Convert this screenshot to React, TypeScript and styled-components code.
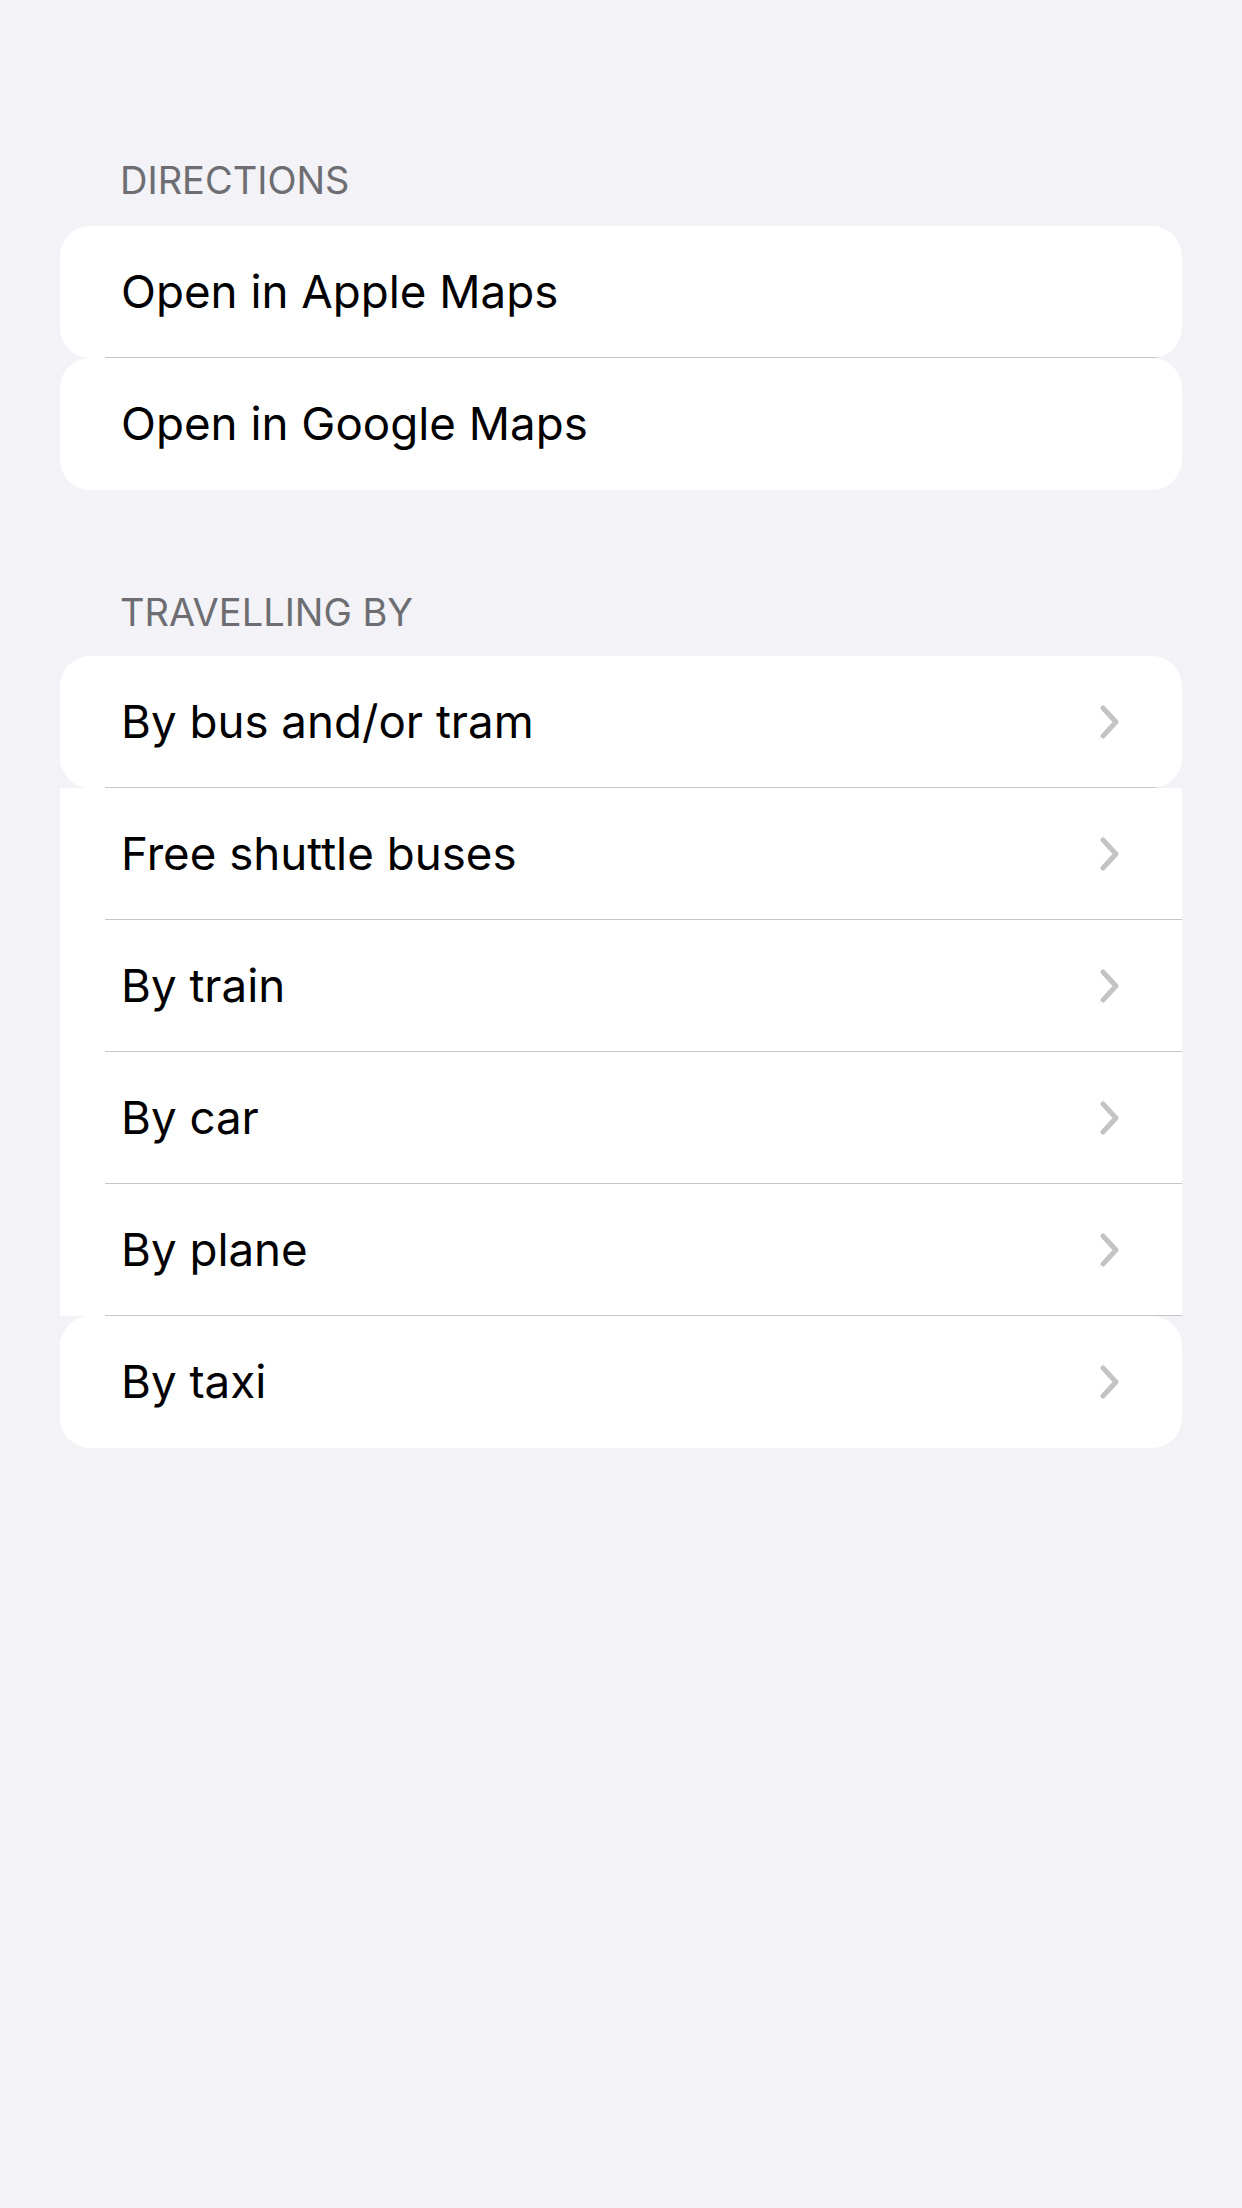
import React from "react";
import styled, { createGlobalStyle } from "styled-components";

const GlobalStyle = createGlobalStyle`
  html, body {
    margin: 0;
    padding: 0;
    background: #f2f2f7;
  }
  body {
    font-family: Inter, "Noto Sans", "Liberation Sans", sans-serif;
    -webkit-font-smoothing: antialiased;
  }
`;

const Page = styled.div`
  min-height: 2208px;
  box-sizing: border-box;
  background: #f2f2f7;
  padding: 157px 60px 0;
  display: flex;
  flex-direction: column;
  gap: 99px;
`;

const Section = styled.section`
  display: flex;
  flex-direction: column;
`;

const SectionHeader = styled.h2<{ $gap: number }>`
  margin: 0 0 ${(p) => p.$gap}px;
  padding-left: 60px;
  font-size: 38px;
  line-height: 46px;
  font-weight: 400;
  color: #6d6d72;
  text-transform: uppercase;
  letter-spacing: 0;
`;

const Group = styled.div`
  display: flex;
  flex-direction: column;
`;

const Row = styled.div<{ $rounded: boolean; $separator: boolean }>`
  height: 132px;
  box-sizing: border-box;
  padding: 0 62px 1px 61px;
  display: flex;
  align-items: center;
  justify-content: space-between;
  border-radius: ${(p) => (p.$rounded ? "30px" : "0")};
  background: ${(p) =>
    p.$separator
      ? "linear-gradient(#c6c6c8, #c6c6c8) no-repeat 45px 100% / calc(100% - 45px) 1px, #ffffff"
      : "#ffffff"};
  cursor: pointer;
`;

const Label = styled.span`
  font-size: 45.7px;
  color: #000000;
  letter-spacing: 0;
`;

const Chevron = styled.svg`
  width: 20px;
  height: 34px;
  flex: none;
`;

const ChevronIcon = () => (
  <Chevron viewBox="0 0 20 34">
    <path
      d="M3 3 L16 17 L3 31"
      fill="none"
      stroke="#c4c4c6"
      strokeWidth={5}
      strokeLinecap="round"
      strokeLinejoin="round"
    />
  </Chevron>
);

type Item = { label: string; rounded: boolean; chevron: boolean };

const directions: Item[] = [
  { label: "Open in Apple Maps", rounded: true, chevron: false },
  { label: "Open in Google Maps", rounded: true, chevron: false },
];

const travelling: Item[] = [
  { label: "By bus and/or tram", rounded: true, chevron: true },
  { label: "Free shuttle buses", rounded: false, chevron: true },
  { label: "By train", rounded: false, chevron: true },
  { label: "By car", rounded: false, chevron: true },
  { label: "By plane", rounded: false, chevron: true },
  { label: "By taxi", rounded: true, chevron: true },
];

const ListSection = ({
  title,
  items,
  headerGap,
}: {
  title: string;
  items: Item[];
  headerGap: number;
}) => (
  <Section>
    <SectionHeader $gap={headerGap}>{title}</SectionHeader>
    <Group>
      {items.map((it, i) => (
        <Row key={it.label} $rounded={it.rounded} $separator={i < items.length - 1}>
          <Label>{it.label}</Label>
          {it.chevron && <ChevronIcon />}
        </Row>
      ))}
    </Group>
  </Section>
);

export default function App() {
  return (
    <>
      <GlobalStyle />
      <Page>
        <ListSection title="Directions" items={directions} headerGap={23} />
        <ListSection title="Travelling by" items={travelling} headerGap={21} />
      </Page>
    </>
  );
}
